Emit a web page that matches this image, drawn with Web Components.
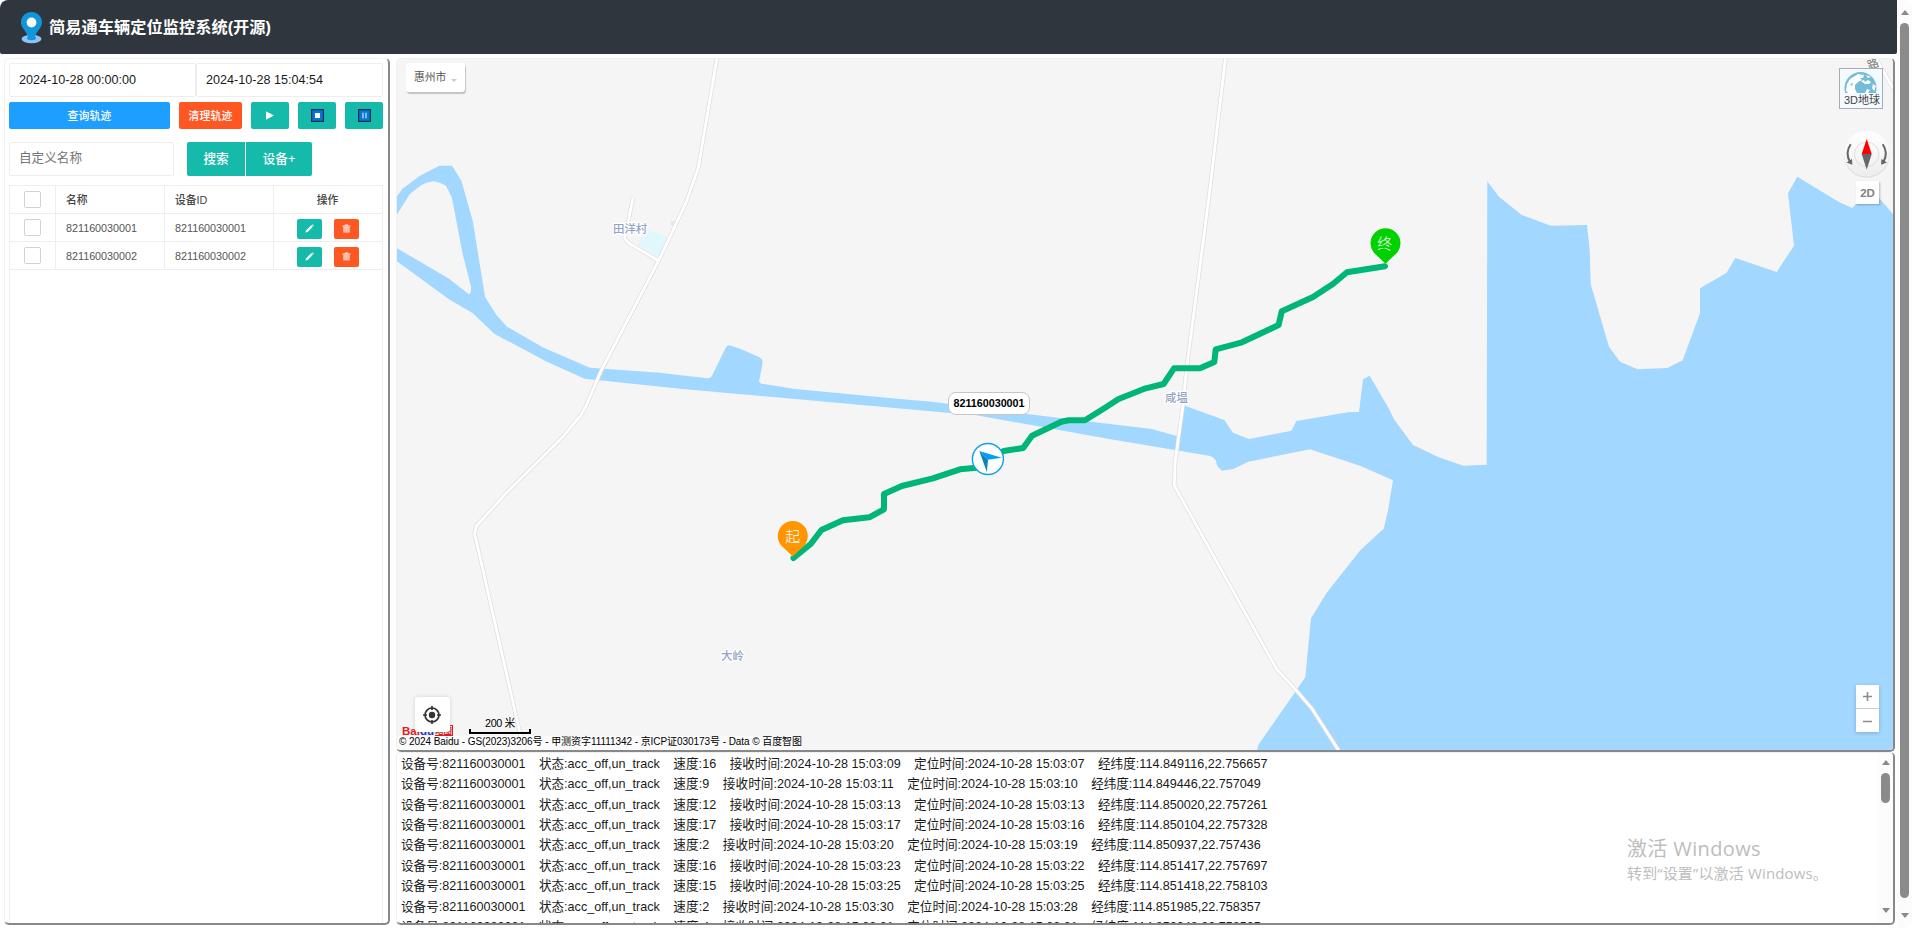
<!DOCTYPE html>
<html lang="zh-CN">
<head>
<meta charset="utf-8">
<title>简易通车辆定位监控系统(开源)</title>
<style>
html,body{margin:0;padding:0;width:1912px;height:928px;overflow:hidden;background:#fff}
body{font:12.6px/1.5 "Liberation Sans","Noto Sans CJK SC",sans-serif;color:#1a1a1a}
</style>
</head>
<body>
<monitor-app></monitor-app>
<script>
const define = (name, css, html, extra) => customElements.define(name, class extends HTMLElement {
  constructor() {
    super();
    const root = this.attachShadow({ mode: 'open' });
    root.innerHTML = `<style>*{box-sizing:border-box}${css}</style>` + (typeof html === 'function' ? html(this) : html);
    if (extra) extra(this, root);
  }
});

/* text run stretched or tightened by tracking to a given width */
customElements.define('fit-text', class extends HTMLElement {
  constructor() {
    super();
    this.attachShadow({ mode: 'open' }).innerHTML =
      '<style>:host{display:inline-block;white-space:pre}</style><span><slot></slot></span>';
  }
  connectedCallback() {
    const want = +this.getAttribute('w');
    const span = this.shadowRoot.querySelector('span');
    const n = [...this.textContent].length;
    const have = span.getBoundingClientRect().width;
    if (want && have) span.style.letterSpacing = ((want - have) / n) + 'px';
  }
});

define('scroll-bar', `
:host{display:flex;flex-direction:column;align-items:center;width:15px;background:#fcfcfc;padding:var(--pt) 0 var(--pb)}
i{flex:none;width:0;height:0;border:4.5px solid transparent}
.u{border-top:0;border-bottom:5px solid #8a8a8a}
.d{border-bottom:0;border-top:5px solid #8a8a8a}
b{flex:none;width:9px;border-radius:4.5px;background:#8b8b8b;height:var(--thumb);margin-top:var(--gap)}
s{flex:1}`, `<i class="u"></i><b></b><s></s><i class="d"></i>`);

define('app-header', `
:host{display:flex;align-items:center;height:54px;background:#2f363d;border-radius:6px 0 2px 2px;padding-left:21px;color:#fff}
h1{margin:0 0 0 7px;font-size:16.2px;line-height:24px;font-weight:700}
svg{display:block;margin-top:1px}`, `
<svg width="21" height="32" viewBox="0 0 21 32">
<ellipse cx="10.5" cy="27" rx="10" ry="4.2" fill="#8cc3ef"/>
<ellipse cx="10.5" cy="26" rx="4.5" ry="2.2" fill="#1296db"/>
<path d="M10.5 0C4.6 0 0 4.6 0 10.3c0 5.3 5 8.700 7.300 14.7h6.400C16 19 21 15.600 21 10.300 21 4.600 16.400 0 10.500 0z" fill="#1296db"/>
<circle cx="10.500" cy="10.500" r="4.900" fill="#fff"/></svg>
<h1><fit-text w="222">简易通车辆定位监控系统(开源)</fit-text></h1>`);

define('ui-button', `
:host{display:flex;align-items:center;justify-content:center;height:27px;border-radius:2px;background:var(--bg,#16baaa);color:#fff;font-size:10.8px;font-weight:500;line-height:1;white-space:nowrap}
`, `<slot></slot>`);

define('ui-input', `
:host{display:flex;align-items:center;height:34px;border:1px solid #eee;border-radius:2px;padding:0 0 2px 9px;background:#fff;font-size:12.6px;line-height:1}
`, `<slot></slot>`);

define('check-box', `:host{display:block;width:17px;height:17px;border:1px solid #d2d2d2;border-radius:2px;background:#fff}`, ``);

const pencil = '<svg width="9" height="9" viewBox="0 0 9 9"><path d="M.4 8.600L1 6.400 6.300 1.100 7.900 2.700 2.600 8z" fill="#fff"/><path d="M6.800.7L7.400.2 8.800 1.600 8.300 2.200z" fill="#fff"/></svg>';
const trash = '<svg width="9" height="9" viewBox="0 0 9 9"><path d="M.5 1.500h2.300V.6h3.400v.9h2.300v1.300H.5z" fill="#ffd9cc"/><path d="M1.300 3.100h6.400V8.400H1.300z" fill="#ffd0c2"/><path d="M3.200 4v3.600M5.800 4v3.600" stroke="#ff8d6b" stroke-width=".7"/></svg>';

define('device-table', `
:host{display:block;border:1px solid #eee;border-bottom:0;color:#555;font-size:10.8px;flex:1}
.r{display:grid;grid-template-columns:46px 109px 109px 108px;height:28px;border-bottom:1px solid #eee}
.r>div{border-right:1px solid #eee;display:flex;align-items:center;padding:2px 0 0 10px;line-height:1}
.r>div:first-child{padding:0 0 0 14px}
.r>div:last-child{border-right:0;padding:1px 1px 0 0;justify-content:center;gap:12px}
.h>div{font-weight:500;color:#444}
ui-button{width:25px;height:20px;margin-top:1px}
.del{--bg:#ff5722}`, () => `
<div class="r h"><div><check-box></check-box></div><div>名称</div><div>设备ID</div><div>操作</div></div>` +
['821160030001', '821160030002'].map(id => `
<div class="r"><div><check-box></check-box></div><div><fit-text w="71">${id}</fit-text></div><div><fit-text w="71">${id}</fit-text></div>
<div><ui-button>${pencil}</ui-button><ui-button class="del">${trash}</ui-button></div></div>`).join(''));

const emoji = inner => `<svg width="13" height="13" viewBox="0 0 13 13"><rect x=".6" y=".6" width="11.800" height="11.800" fill="#0078d7" stroke="#0b2a4a" stroke-width="1.200"/>${inner}</svg>`;

define('side-panel', `
:host{display:flex;flex-direction:column;padding:4px 5px 0 4px;width:386px;border:1px solid #f0f0f0;border-right:2px solid #888;border-bottom:2px solid #888;border-radius:5px;background:#fff;overflow:hidden}
.dates{display:grid;grid-template-columns:187px 187px}
.dates ui-input{padding-bottom:0}
.acts{display:grid;grid-template-columns:161px 63px 38px 38px 38px;gap:9px;margin-top:5px}
.acts fit-text{position:relative;top:1px}
.find{display:flex;margin:13px 0 9px}
.find ui-input{width:165px;color:#757575;margin-right:13px}
.find ui-button{height:34px;font-size:12.6px}
.a{width:58px;border-radius:2px 0 0 2px}.b{width:66px;margin-left:1px;border-radius:0 2px 2px 0}
`, `
<div class="dates"><ui-input><fit-text w="117">2024-10-28 00:00:00</fit-text></ui-input><ui-input><fit-text w="117">2024-10-28 15:04:54</fit-text></ui-input></div>
<div class="acts"><ui-button style="--bg:#1e9fff"><fit-text w="44">查询轨迹</fit-text></ui-button><ui-button style="--bg:#ff5722"><fit-text w="44">清理轨迹</fit-text></ui-button>
<ui-button><svg width="8" height="9" viewBox="0 0 8 9"><path d="M0 .3L7.800 4.500 0 8.700z" fill="#fff"/></svg></ui-button>
<ui-button>${emoji('<rect x="4" y="4" width="5" height="5" fill="#fff"/>')}</ui-button>
<ui-button>${emoji('<path d="M5 3.700v5.600M8 3.700v5.600" stroke="#fff" stroke-width="1"/>')}</ui-button></div>
<div class="find"><ui-input>自定义名称</ui-input><ui-button class="a">搜索</ui-button><ui-button class="b">设备+</ui-button></div>
<device-table></device-table>`);

define('map-canvas', `:host{display:block}svg{display:block}
.lbl{font:500 11.400px "Noto Sans CJK SC",sans-serif;fill:#93a3c6;stroke:#fff;stroke-width:2.500px;paint-order:stroke;stroke-linejoin:round}
.pin{font:300 15px "Noto Sans CJK SC",sans-serif;fill:#fff;text-anchor:middle}
.road{fill:none;stroke-linejoin:round}`, () => {
  const roads = [
    'M717 58L698.200 168.300 685.700 203.300 658.600 260.700 600.700 371.700 585.700 406.700 581 415 561.400 438.300 506 493.300 486.400 515 476.400 526 474.600 533.300 507.900 680 524 751',
    'M632.900 197.700L628.600 220 624.600 238.300 629 243.300 658.600 260.700',
    'M1225.500 58L1208.600 200 1186.400 370 1183 405 1175 463.300 1174.300 485 1176.800 490 1276.700 669.300 1296 690 1311.700 708.300 1339 751',
    'M1872 52L1896 93'
  ].join('');
  return `<svg width="1496" height="691" viewBox="397 59 1496 691">
<rect x="397" y="59" width="1496" height="691" fill="#f5f5f5"/>
<path fill="#a2d7ff" d="M396 197.500L402.500 188.700 420 175.700 439.300 165.700H452L461.400 180.700 472.900 221.700 485 296.700 496.400 315 507 326.700 543.600 347.700 590 367.700 659.600 372.700 707 378.300Q710.500 378.500 711.800 376.300L725.700 347.700Q727.500 344 731 345.700L740 348.700 759.600 357.300Q763 359.500 762.500 363.500L759 381.700 761.400 383.700 795.400 389 900 399 932 401.700 1029 414.300 1151.800 429 1176.800 436 1183 405 1224.300 420 1233 432.700 1249 439 1291.400 430.700 1296.400 421 1348 412.300 1359 412 1363 379.300 1369.600 375.700 1388.600 408.300 1394 419.300 1413 445 1437.500 456.700 1463.300 465.700 1486.700 464.700 1487.300 181.300 1499 196.700 1521.700 215 1550.700 225.700 1587 225 1589.700 250 1590.700 284.300 1609 346.700 1620 361.700 1637.700 369.300 1667.300 368 1682.700 360.300 1700 313.300V288.300L1726.700 272.700 1735.300 258 1776.700 272 1794 245.700 1788 193.300 1797.300 176.700 1839.300 202.300 1852.300 208 1866 193 1879.300 198.300 1893 214V751H1257L1258.300 745 1305.300 677.300 1311 618.300 1326.700 592.700 1360.700 549.700 1383.700 528.700 1388 510.700 1393 480.300 1360.700 466 1310 449.300 1248.300 461.700 1233.300 469 1221.700 470.700 1217.300 466Q1216 458 1210.500 456L1110.700 439.300 975 415 950 413 682.900 389 584.600 378.700 547 361.700 494.600 334 472.900 313.300 448.200 298.700 396 260.500V247.700L447.900 278 468.600 294Q471.500 294 471 286.700L462.500 253.300 451.800 197.300 446 185.700Q440 182 433.600 181.300 427 182 421.400 185L410 193.700 396 216z"/>
<path fill="#dff7fd" d="M645 229L666.800 236.700 658.600 257.300 638 245z"/>
<path fill="#e2e9f3" d="M671.500 220.500l4 1.500-1.500 4-4-1.500z"/>
<path class="road" d="${roads}" stroke="#dcdde2" stroke-width="4.200"/>
<path class="road" d="${roads}" stroke="#fff" stroke-width="2.800"/>
<text class="lbl" x="613" y="232.500">田洋村</text>
<text class="lbl" x="1165" y="402">咸塭</text>
<text class="lbl" x="721" y="660">大岭</text>
<text class="lbl" x="1867" y="68" style="fill:#888" transform="rotate(-20 1873 63)">路</text>
<path fill="none" stroke="#00b676" stroke-width="6" stroke-linejoin="round" stroke-linecap="round" d="M793.500 558L810.700 544 821.400 530 842.900 520.300 869.300 517.300 884 509.300V494L901.800 486 932.900 478.300 960 469.300 976.800 467.700 990 459 1003.600 451 1023.200 448 1032 435.700 1061.400 421.700 1068.600 420.300H1085L1104.300 408.300 1118.600 399 1145.700 388.300 1163.600 384 1174 368.300H1200L1214.300 362 1215.700 349.300 1242 342.300 1278.600 325 1281.800 311.300 1313 297 1332.900 284 1347 272.300 1385 266.300"/>
<path fill="#ff9500" d="M792.800 556.500L781 545.300A15 15 0 1 1 804.600 545.300z"/>
<text class="pin" x="792.800" y="541.500">起</text>
<path fill="#00d200" d="M1385.500 263.800L1373.700 252.500A15 15 0 1 1 1397.300 252.500z"/>
<text class="pin" x="1384.800" y="248.500">终</text>
<circle cx="987.900" cy="459" r="15.500" fill="#fff" stroke="#07a2ec" stroke-width="1.400"/>
<path fill="#00a0f0" d="M979.300 451L1001.800 457.800 988 459.800z"/>
<path fill="#0a80bf" d="M979.300 451L988 459.800 986.900 472z"/>
</svg>`;
});

define('map-view', `
:host{display:block;position:relative;height:694px;border:1px solid #f0f0f0;border-right:2px solid #888;border-bottom:2px solid #888;border-radius:5px;overflow:hidden;background:#f5f5f5;color:#000}
.o{position:absolute;background:#fff}
.city{left:9px;top:4px;width:59px;height:29px;border-radius:3px;box-shadow:1px 2px 1px rgba(0,0,0,.2);display:flex;align-items:center;padding:0 0 1px 8px;font-size:10.800px;color:#555}
.city i{margin:6px 0 0 5px;border:3px solid transparent;border-top-color:#c8cad4;border-bottom:0}
.tag{left:551px;top:333px;width:82px;height:23px;border:1px solid #c6c6c6;border-radius:8px;display:flex;align-items:center;justify-content:center;font-size:10.800px;line-height:1;font-weight:700}
.earth{left:1442px;top:9px;width:44px;height:41px;border:1px solid #a6adb5;background:#f3fbff;font-size:11px;line-height:12px;color:#444}
.earth svg{display:block;margin:3px 0 0 4px}.earth fit-text{margin:1px 0 0 4px;display:block}
.compass{left:1446px;top:71px;background:none}
.two{left:1459px;top:122px;width:23px;height:23px;box-shadow:1px 1px 2px rgba(0,0,0,.25);font:bold 11.500px/24px "Liberation Sans",sans-serif;color:#808080;text-align:center}
.zoom{left:1459px;top:626px;width:23px;height:47px;box-shadow:0 1px 4px rgba(0,0,0,.2)}
.baidu{left:5px;top:665px;height:12px;background:none;display:flex;align-items:flex-start;font:900 11.500px/14px "Liberation Sans","Noto Sans CJK SC",sans-serif;color:#e01c1c}
.baidu b{color:#2b30dc;margin:0 1px 0 0}.baidu em{font:700 8.500px/9px "Noto Sans CJK SC",sans-serif;margin-top:1px;height:11px;border:1px solid #e01c1c;border-left:0}
.loc{left:18px;top:638px;width:35px;height:35px;border-radius:3px;box-shadow:0 0 4px rgba(0,0,0,.15);display:flex;align-items:center;justify-content:center;padding-right:2px}
.scale{left:72px;top:656px;width:62px;height:19px;background:none;text-align:center;font-size:10.800px;line-height:17px}
.scale i{position:absolute;left:0;right:0;bottom:0;height:5px;border:2px solid #000;border-top:0}
.copy{left:0;top:677px;height:14px;padding:0 0 0 2px;background:rgba(255,255,255,.6);font-size:10px;line-height:11px;white-space:nowrap}
`, `<map-canvas></map-canvas>
<div class="o city">惠州市<i></i></div>
<div class="o tag"><fit-text w="71">821160030001</fit-text></div>
<div class="o earth"><svg width="34" height="21" viewBox="0 0 34 21"><defs><clipPath id="c"><circle cx="16.500" cy="16" r="16"/></clipPath></defs>
<g clip-path="url(#c)"><rect width="34" height="21" fill="#74bcd8"/>
<path fill="#fff" d="M2 19L3 12 6 7 11 4 14 2 20 3 19 6 16 6 18 8 14 10 11 13 11 17 13 21H4z"/>
<path fill="#fff" d="M17 9L20 8 21 10 24 8 27 10 25 12 21 12zM22 3L27 5 24 6zM29 12L32 14 30 19 28 16zM23 17L26 18 24 21H21z"/>
<path fill="#74bcd8" d="M6 12L9 11 8 14z"/></g></svg><fit-text w="36">3D地球</fit-text></div>
<div class="o compass"><svg width="48" height="48" viewBox="0 0 48 48"><defs><linearGradient id="g" x2="0" y2="1"><stop stop-color="#fff"/><stop offset="1" stop-color="#ededed"/></linearGradient></defs>
<circle cx="23.800" cy="25" r="22.800" fill="#ddd"/><circle cx="23.700" cy="23.700" r="22.700" fill="url(#g)"/>
<circle cx="23.700" cy="24.300" r="12.300" fill="none" stroke="#ddd"/>
<path d="M23.700 9L28.700 24H18.700z" fill="#f00"/><path d="M23.700 39.500L28.700 24H18.700z" fill="#666"/>
<path d="M7.700 14.300Q1.800 23 7 32M39.700 14.300Q45.600 23 40.400 32" fill="none" stroke="#666" stroke-width="2"/>
<path d="M3.500 32.500L9.300 34.800 9 29zM43.900 32.500L38.100 34.800 38.400 29z" fill="#666"/></svg></div>
<div class="o two">2D</div>
<div class="o zoom"><svg width="23" height="47"><path d="M0 23.500H23" stroke="#ccc"/><path d="M7 11.500H16M11.500 7V16M7 36.500H16" stroke="#8c8c8c" stroke-width="1.600"/></svg></div>
<div class="o baidu">Bai<b>du</b><em>地图</em></div>
<div class="o loc"><svg width="20" height="20" viewBox="0 0 20 20"><circle cx="10" cy="10" r="7" fill="none" stroke="#333" stroke-width="1.700"/><circle cx="10" cy="10" r="3.200" fill="#333"/><path d="M10 1V5M10 15V19M1 10H5M15 10H19" stroke="#333" stroke-width="1.700"/></svg></div>
<div class="o scale"><fit-text w="30">200 米</fit-text><i></i></div>
<div class="o copy"><fit-text w="403">© 2024 Baidu - GS(2023)3206号 - 甲测资字11111342 - 京ICP证030173号 - Data © 百度智图</fit-text></div>`);

const logs = [
  [16, '09', '07', '114.849116,22.756657'], [9, '11', '10', '114.849446,22.757049'],
  [12, '13', '13', '114.850020,22.757261'], [17, '17', '16', '114.850104,22.757328'],
  [2, '20', '19', '114.850937,22.757436'], [16, '23', '22', '114.851417,22.757697'],
  [15, '25', '25', '114.851418,22.758103'], [2, '30', '28', '114.851985,22.758357'],
  [4, '31', '31', '114.852048,22.758505']
];
define('log-panel', `
:host{display:flex;height:173px;border:1px solid #f0f0f0;border-right:2px solid #888;border-bottom:2px solid #888;border-radius:5px;overflow:hidden;background:#fff}
.l{flex:1;padding:.6px 0 0 4px;overflow:hidden}
.l div{height:20.480px;line-height:20.480px;display:flex;gap:13.400px;white-space:pre}
scroll-bar{--pt:7px;--gap:8px;--thumb:30px;--pb:10px}`, () => `<div class="l">` + logs.map(([s, a, b, p]) =>
`<div><fit-text w="124.500">设备号:821160030001</fit-text><fit-text w="121">状态:acc_off,un_track</fit-text><fit-text w="${s > 9 ? 43 : 36.200}">速度:${s}</fit-text><fit-text w="171">接收时间:2024-10-28 15:03:${a}</fit-text><fit-text w="170.500">定位时间:2024-10-28 15:03:${b}</fit-text><fit-text w="169.500">经纬度:${p}</fit-text></div>`).join('') + `</div><scroll-bar></scroll-bar>`);

define('os-watermark', `
:host{position:absolute;left:1627px;top:832.5px;color:#bdbdbd;font-family:"Open Sans","Noto Sans CJK SC",sans-serif;white-space:nowrap}
p{margin:0;font-size:20px;line-height:32px}
p+p{font-size:15px;line-height:16px}`, `<p><fit-text w="134">激活 Windows</fit-text></p><p><fit-text w="201">转到“设置”以激活 Windows。</fit-text></p>`);

define('monitor-app', `
:host{display:grid;grid-template-columns:1897px 15px;width:1912px;height:928px;position:relative;border-radius:8px;overflow:hidden;background:#fff}
main{display:grid;grid-template-columns:386px 1499px;gap:6px;padding:4px 0 0 4px;height:871px}
scroll-bar{--pt:10px;--gap:8px;--thumb:875px;--pb:10px}`, `
<div><app-header></app-header><main><side-panel></side-panel><div><map-view></map-view><log-panel></log-panel></div></main></div>
<scroll-bar></scroll-bar><os-watermark></os-watermark>`);
</script>
</body>
</html>
